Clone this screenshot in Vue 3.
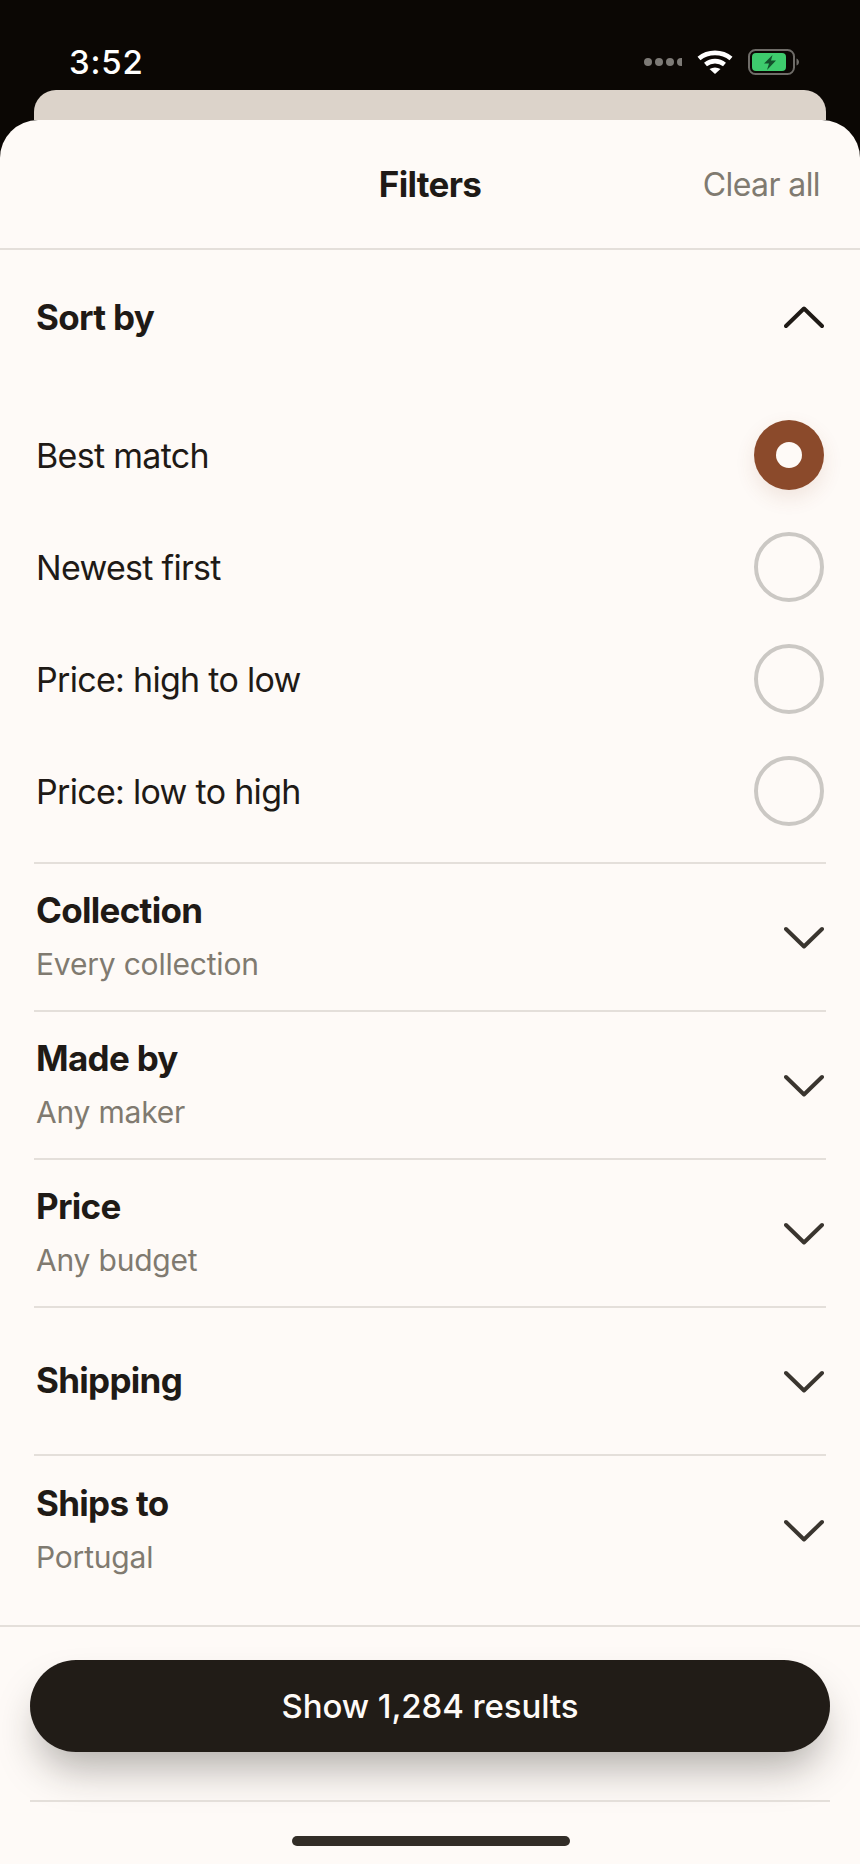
<script setup>
const options = [
  { label: 'Best match', selected: true },
  { label: 'Newest first', selected: false },
  { label: 'Price: high to low', selected: false },
  { label: 'Price: low to high', selected: false },
]
const rows = [
  { title: 'Collection', sub: 'Every collection' },
  { title: 'Made by', sub: 'Any maker' },
  { title: 'Price', sub: 'Any budget' },
  { title: 'Shipping', sub: '' },
  { title: 'Ships to', sub: 'Portugal' },
]
</script>

<template>
  <div class="screen">
    <div class="status">
      <span class="time">3:52</span>
      <div class="status-icons">
        <div class="signal"><i></i><i></i><i></i><i class="cut"></i></div>
        <svg class="wifi" width="36" height="24" viewBox="0 0 36 24">
          <path d="M2 8.500C11 1 25 1 34 8.500" fill="none" stroke="#fff" stroke-width="4.600" />
          <path d="M8.500 14.500C14 10 22 10 27.500 14.500" fill="none" stroke="#fff" stroke-width="4.600" />
          <path d="M12.500 19L18 24L23.500 19C20 17 16 17 12.500 19Z" fill="#fff" />
        </svg>
        <svg class="battery" width="52" height="26" viewBox="0 0 52 26">
          <rect x="1" y="1" width="45" height="24" rx="6.500" fill="none" stroke="#6f6c68" stroke-width="2" />
          <rect x="4" y="4" width="34" height="18" rx="4" fill="#3ecb6d" />
          <path d="M48.500 9.500C50 10 51 11.500 51 13C51 14.500 50 16 48.500 16.500Z" fill="#6f6c68" />
          <path d="M24.500 6L16 14.500H21L19 21L28 11.500H23Z" fill="#14502c" />
        </svg>
      </div>
    </div>
    <div class="peek"></div>
    <div class="sheet">
      <header class="sheet-head">
        <span></span>
        <h1>Filters</h1>
        <button class="clear">Clear all</button>
      </header>
      <div class="scroll">
        <section class="sort">
          <div class="sort-head">
            <span class="title">Sort by</span>
            <svg class="chev" width="40" height="24" viewBox="0 0 40 24">
              <path d="M2 21L20 3.500L38 21" fill="none" stroke="#1f1a16" stroke-width="4" stroke-linecap="round" stroke-linejoin="round" />
            </svg>
          </div>
          <div class="options">
            <div v-for="o in options" :key="o.label" class="option">
              <span>{{ o.label }}</span>
              <span class="radio" :class="{ on: o.selected }"></span>
            </div>
          </div>
        </section>
        <div v-for="r in rows" :key="r.title" class="row">
          <div class="row-text">
            <span class="title">{{ r.title }}</span>
            <span v-if="r.sub" class="sub">{{ r.sub }}</span>
          </div>
          <svg class="chev" width="40" height="24" viewBox="0 0 40 24">
            <path d="M2 4L20 21.500L38 4" fill="none" stroke="#3a352f" stroke-width="4" stroke-linecap="round" stroke-linejoin="round" />
          </svg>
        </div>
      </div>
      <footer class="foot">
        <button class="show">Show 1,284 results</button>
        <div class="foot-rule"></div>
        <div class="home"></div>
      </footer>
    </div>
  </div>
</template>

<style>
html, body { margin: 0; background: #0b0704; }
</style>

<style scoped>
.screen {
  width: 860px;
  height: 1864px;
  background: #0b0704;
  display: flex;
  flex-direction: column;
  overflow: hidden;
  font-family: Inter, "Liberation Sans", sans-serif;
  color: #1f1a16;
}
.status {
  height: 90px;
  box-sizing: border-box;
  padding: 42px 60px 0 69px;
  display: flex;
  justify-content: space-between;
  align-items: flex-start;
  flex: none;
}
.time {
  color: #fff;
  font-size: 33px;
  line-height: 40px;
  font-weight: 500;
  letter-spacing: 0.8px;
}
.status-icons {
  display: flex;
  align-items: center;
  gap: 15px;
  margin-top: 7px;
}
.signal { display: flex; gap: 3px; width: 38px; overflow: hidden; }
.signal i {
  flex: none;
  width: 8px;
  height: 8px;
  border-radius: 50%;
  background: #7d7a76;
}
.wifi, .battery { display: block; flex: none; }
.peek {
  flex: none;
  height: 30px;
  margin: 0 34px;
  background: #dcd3ca;
  border-radius: 22px 22px 0 0;
}
.sheet {
  flex: 1;
  min-height: 0;
  background: #fefaf7;
  border-radius: 38px 38px 0 0;
  display: flex;
  flex-direction: column;
}
.sheet-head {
  flex: none;
  height: 130px;
  box-sizing: border-box;
  border-bottom: 2px solid #e4dfda;
  display: grid;
  grid-template-columns: 1fr auto 1fr;
  align-items: center;
  padding: 0 40px;
}
.sheet-head h1 {
  margin: 0;
  font-size: 35px;
  font-weight: 700;
  letter-spacing: -0.7px;
}
.clear {
  justify-self: end;
  border: 0;
  background: none;
  padding: 0;
  font: 400 32px Inter, sans-serif;
  color: #807a70;
  letter-spacing: -0.6px;
}
.scroll {
  flex: 1;
  min-height: 0;
  margin: 0 34px;
  display: flex;
  flex-direction: column;
}
.sort { border-bottom: 2px solid #e4dfda; padding: 0 2px 15px; }
.sort-head {
  height: 134px;
  display: flex;
  align-items: center;
  justify-content: space-between;
}
.title {
  font-size: 35px;
  line-height: 42px;
  font-weight: 700;
  letter-spacing: -0.7px;
}
.options { padding-top: 15px; }
.option {
  height: 112px;
  display: flex;
  align-items: center;
  justify-content: space-between;
  font-size: 34px;
  letter-spacing: -0.7px;
}
.radio {
  width: 70px;
  height: 70px;
  box-sizing: border-box;
  border-radius: 50%;
  border: 4px solid #cbc8c4;
  display: flex;
  align-items: center;
  justify-content: center;
}
.radio.on {
  background: #8b4a2b;
  border: 0;
  box-shadow: 0 8px 20px rgba(139, 74, 43, 0.12);
}
.radio.on::after {
  content: "";
  width: 26px;
  height: 26px;
  border-radius: 50%;
  background: #fefaf7;
}
.row {
  flex: none;
  height: 148px;
  box-sizing: border-box;
  border-bottom: 2px solid #e4dfda;
  padding: 0 2px;
  display: flex;
  align-items: center;
  justify-content: space-between;
}
.row:last-child { border-bottom: 0; }
.row-text { display: flex; flex-direction: column; gap: 14px; margin-bottom: 2px; }
.sub {
  font-size: 30px;
  line-height: 38px;
  color: #807a70;
  letter-spacing: -0.2px;
}
.chev { flex: none; display: block; }
.foot {
  flex: none;
  height: 239px;
  box-sizing: border-box;
  border-top: 2px solid #e4dfda;
  padding: 33px 30px 0;
  display: flex;
  flex-direction: column;
  align-items: center;
}
.show {
  width: 100%;
  height: 92px;
  flex: none;
  border: 0;
  border-radius: 46px;
  background: #211c17;
  color: #fefaf7;
  font: 500 33px Inter, sans-serif;
  letter-spacing: -0.1px;
  box-shadow: 0 24px 40px -8px rgba(33, 28, 23, 0.34);
}
.foot-rule {
  width: 100%;
  height: 2px;
  flex: none;
  margin-top: 48px;
  background: #e4dfda;
}
.home {
  width: 278px;
  height: 10px;
  flex: none;
  margin: 34px 0 0 2px;
  border-radius: 5px;
  background: #322d27;
}
</style>
